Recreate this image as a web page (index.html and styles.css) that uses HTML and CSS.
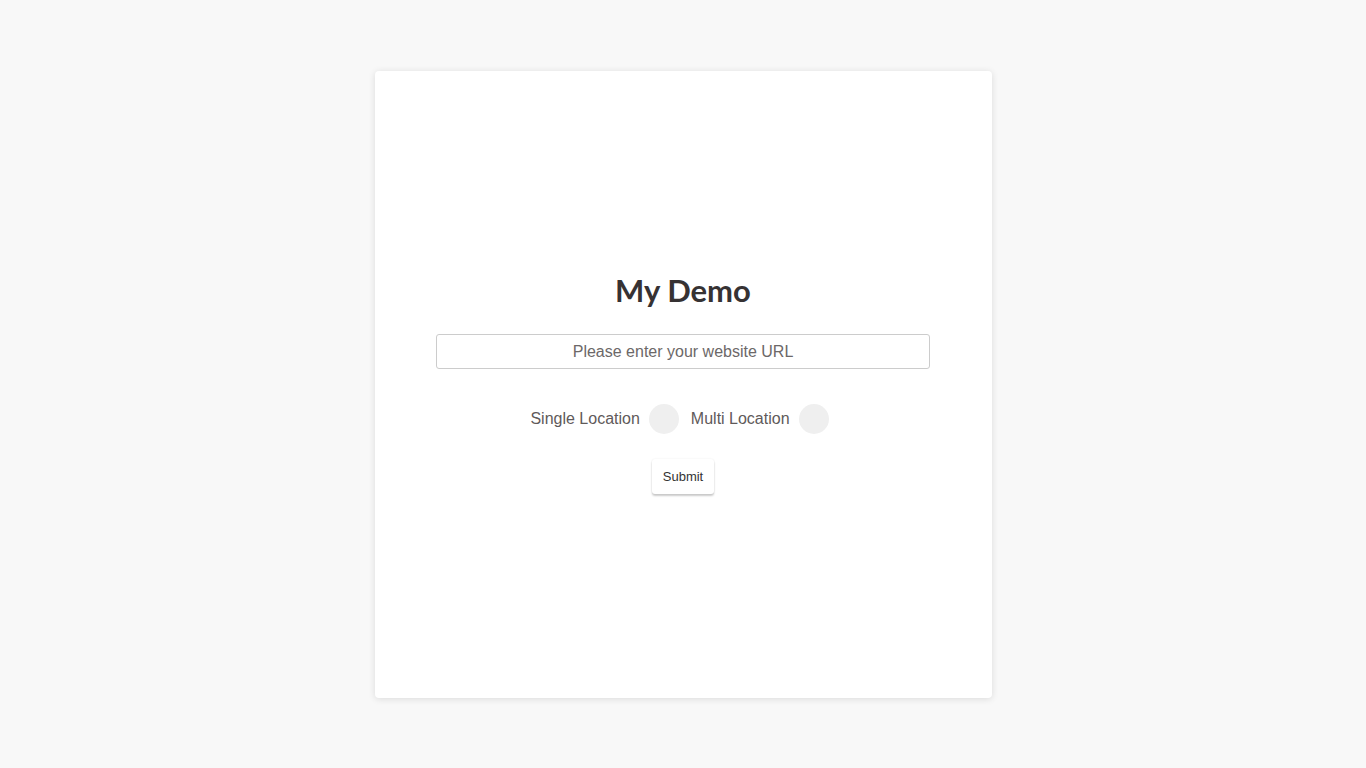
FILE: index.html
```html
<!DOCTYPE html>
<html lang="en">
<head>
<meta charset="utf-8">
<title>My Demo</title>
<link rel="stylesheet" href="styles.css">
</head>
<body>
<main class="card">
  <h1 class="title">My Demo</h1>
  <input class="url" type="text" placeholder="Please enter your website URL">
  <div class="options">
    <label class="option"><span class="option-text">Single Location</span><span class="radio"></span></label>
    <label class="option"><span class="option-text">Multi Location</span><span class="radio"></span></label>
  </div>
  <button class="submit" type="button">Submit</button>
</main>
</body>
</html>
```

FILE: styles.css
```css
html, body {
  margin: 0;
  padding: 0;
  background: #f8f8f8;
  font-family: "Liberation Sans", Arial, sans-serif;
}
body {
  padding-top: 71px;
  min-height: 768px;
  box-sizing: border-box;
}
.card {
  width: 617px;
  height: 627px;
  margin: 0 auto;
  background: #fff;
  border-radius: 4px;
  box-shadow: 0 1px 7px rgba(0, 0, 0, 0.12);
  box-sizing: border-box;
  padding-top: 200px;
  display: flex;
  flex-direction: column;
  align-items: center;
}
.title {
  margin: 0;
  font-family: Lato, "Open Sans", sans-serif;
  font-weight: 700;
  font-size: 31px;
  line-height: 38px;
  color: #363233;
}
.url {
  margin-top: 25px;
  width: 494px;
  height: 35px;
  box-sizing: border-box;
  border: 1px solid #ccc;
  border-radius: 3px;
  text-align: center;
  font-family: "Liberation Sans", Arial, sans-serif;
  font-size: 16px;
  color: #333;
  outline: none;
  padding: 0 8px;
}
.url::placeholder {
  color: #6c6868;
  opacity: 1;
}
.options {
  margin-top: 35px;
  display: flex;
  align-items: center;
  gap: 12px;
  height: 30px;
  padding-right: 7px;
}
.option {
  display: flex;
  align-items: center;
  gap: 9px;
}
.option-text {
  font-size: 16px;
  color: #5f5a5a;
}
.radio {
  width: 30px;
  height: 30px;
  border-radius: 50%;
  background: #efefef;
}
.submit {
  margin-top: 25px;
  width: 62px;
  height: 35px;
  border: none;
  background: #fff;
  border-radius: 3px;
  box-shadow: 0 2px 2px rgba(0, 0, 0, 0.2), 0 0 2px rgba(0, 0, 0, 0.08);
  font-family: "Liberation Sans", Arial, sans-serif;
  font-size: 13px;
  color: #333;
  padding: 0;
}
```
